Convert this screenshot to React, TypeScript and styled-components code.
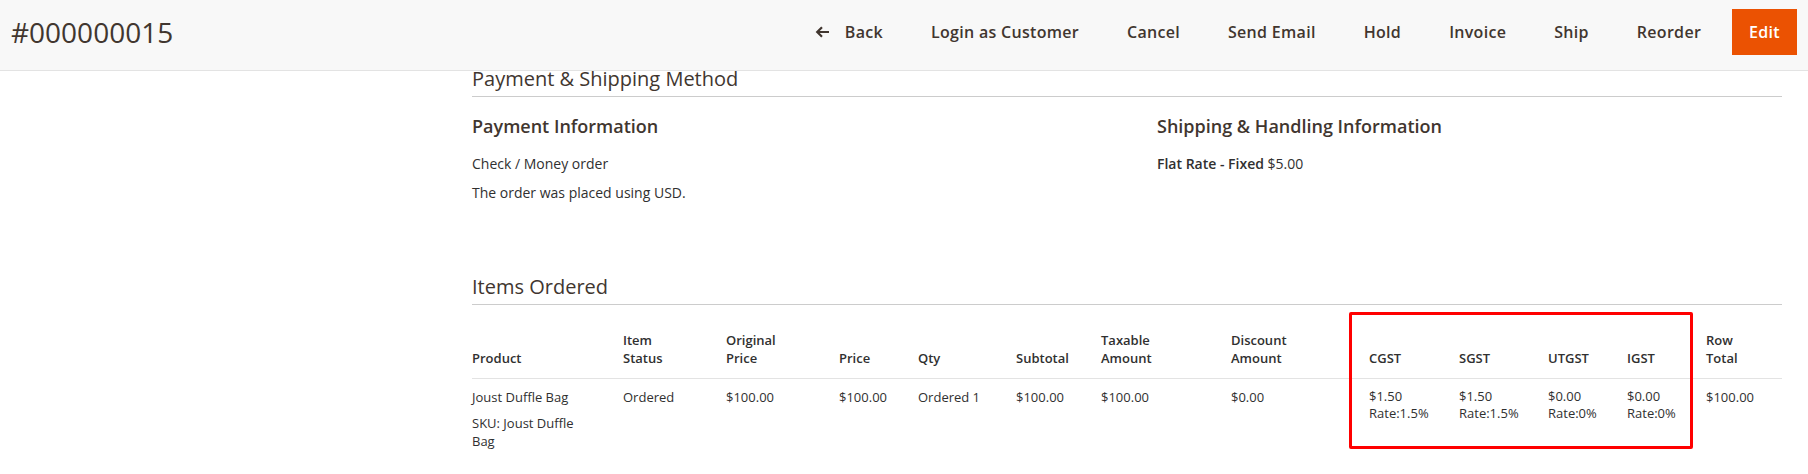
import React from "react";
import styled, { createGlobalStyle } from "styled-components";

const GlobalStyle = createGlobalStyle`
  html, body {
    margin: 0;
    padding: 0;
    background: #ffffff;
  }
  body {
    font-family: "Open Sans", "Noto Sans", sans-serif;
    color: #303030;
    font-size: 14px;
  }
`;

const Header = styled.header`
  display: flex;
  align-items: center;
  justify-content: space-between;
  height: 70px;
  box-sizing: content-box;
  padding: 0 11px;
  background: #f8f8f8;
  border-bottom: 1px solid #e3e3e3;
`;

const PageTitle = styled.h1`
  margin: 0 0 7px;
  font-size: 28px;
  font-weight: 400;
  line-height: 40px;
  color: #41362f;
`;

const Actions = styled.div`
  display: flex;
  align-items: center;
  gap: 14px;
  margin-bottom: 6px;
`;

const ActionButton = styled.button<{ $primary?: boolean }>`
  display: inline-flex;
  align-items: center;
  gap: 15px;
  height: 46px;
  padding: 0 17px;
  border: 0;
  border-radius: 0;
  background: ${(p) => (p.$primary ? "#eb5202" : "transparent")};
  color: ${(p) => (p.$primary ? "#ffffff" : "#41362f")};
  font-family: "Open Sans", sans-serif;
  font-size: 16px;
  font-weight: 600;
  letter-spacing: 0.3px;
  line-height: 20px;
  cursor: pointer;
`;

const Content = styled.main`
  padding: 0 26px 0 472px;
`;

const SectionTitle = styled.h2<{ $gap?: number }>`
  margin: ${(p) => p.$gap ?? 0}px 0 0;
  padding-bottom: 9px;
  border-bottom: 1px solid #cccccc;
  font-size: 20px;
  font-weight: 400;
  line-height: 16px;
  color: #41362f;
`;

const InfoGrid = styled.div`
  display: grid;
  grid-template-columns: 1fr 1fr;
  column-gap: 60px;
  margin-top: 18px;
`;

const InfoTitle = styled.h3`
  margin: 0 0 17px;
  font-size: 18px;
  font-weight: 600;
  line-height: 22px;
  color: #41362f;
`;

const InfoLine = styled.p`
  margin: 0 0 10px;
  font-size: 14px;
  line-height: 19px;
  color: #303030;

  strong {
    font-weight: 600;
  }
`;

const TableArea = styled.div`
  position: relative;
  margin-top: 16px;
`;

const ItemsTable = styled.table`
  width: 100%;
  table-layout: fixed;
  border-collapse: collapse;
  font-size: 13px;
  color: #303030;
`;

const HeadRow = styled.tr`
  border-bottom: 1px solid #e3e3e3;
`;

const HeadCell = styled.th`
  padding: 10px 10px 11px 0;
  text-align: left;
  vertical-align: bottom;
  font-weight: 600;
  line-height: 18px;
  color: #303030;
`;

const HeadLabel = styled.span`
  display: block;
  width: min-content;
`;

const Cell = styled.td<{ $wide?: boolean }>`
  padding: 9px ${(p) => (p.$wide ? 30 : 10)}px 4px 0;
  text-align: left;
  vertical-align: top;
  line-height: 18px;
`;

const Sku = styled.div`
  margin-top: 8px;
`;

const TaxLine = styled.div`
  line-height: 17px;
`;

const Highlight = styled.div`
  position: absolute;
  top: -9px;
  left: 877px;
  width: 344px;
  height: 137px;
  box-sizing: border-box;
  border: 3px solid #ff0000;
  border-radius: 2px;
  pointer-events: none;
`;

const BackArrow = () => (
  <svg width="15" height="12" viewBox="0 0 15 12" aria-hidden="true">
    <path
      d="M14 6H2.5M7 1.2L2.2 6L7 10.8"
      fill="none"
      stroke="#41362f"
      strokeWidth="2.2"
    />
  </svg>
);

const columns = [151, 103, 113, 79, 98, 85, 130, 138, 90, 89, 79, 79, 76];

const headers = [
  "Product",
  "Item Status",
  "Original Price",
  "Price",
  "Qty",
  "Subtotal",
  "Taxable Amount",
  "Discount Amount",
  "CGST",
  "SGST",
  "UTGST",
  "IGST",
  "Row Total",
];

const taxes = [
  { amount: "$1.50", rate: "Rate:1.5%" },
  { amount: "$1.50", rate: "Rate:1.5%" },
  { amount: "$0.00", rate: "Rate:0%" },
  { amount: "$0.00", rate: "Rate:0%" },
];

const actions = [
  "Login as Customer",
  "Cancel",
  "Send Email",
  "Hold",
  "Invoice",
  "Ship",
  "Reorder",
];

export default function App() {
  return (
    <>
      <GlobalStyle />
      <Header>
        <PageTitle>#000000015</PageTitle>
        <Actions>
          <ActionButton>
            <BackArrow />
            Back
          </ActionButton>
          {actions.map((a) => (
            <ActionButton key={a}>{a}</ActionButton>
          ))}
          <ActionButton $primary>Edit</ActionButton>
        </Actions>
      </Header>
      <Content>
        <SectionTitle>Payment &amp; Shipping Method</SectionTitle>
        <InfoGrid>
          <div>
            <InfoTitle>Payment Information</InfoTitle>
            <InfoLine>Check / Money order</InfoLine>
            <InfoLine>The order was placed using USD.</InfoLine>
          </div>
          <div>
            <InfoTitle>Shipping &amp; Handling Information</InfoTitle>
            <InfoLine>
              <strong>Flat Rate - Fixed</strong> $5.00
            </InfoLine>
          </div>
        </InfoGrid>
        <SectionTitle $gap={67}>Items Ordered</SectionTitle>
        <TableArea>
          <ItemsTable>
            <colgroup>
              {columns.map((w, i) => (
                <col key={i} style={{ width: w }} />
              ))}
            </colgroup>
            <thead>
              <HeadRow>
                {headers.map((h) => (
                  <HeadCell key={h}>
                    <HeadLabel>{h}</HeadLabel>
                  </HeadCell>
                ))}
              </HeadRow>
            </thead>
            <tbody>
              <tr>
                <Cell $wide>
                  <div>Joust Duffle Bag</div>
                  <Sku>SKU: Joust Duffle Bag</Sku>
                </Cell>
                <Cell>Ordered</Cell>
                <Cell>$100.00</Cell>
                <Cell>$100.00</Cell>
                <Cell>Ordered 1</Cell>
                <Cell>$100.00</Cell>
                <Cell>$100.00</Cell>
                <Cell>$0.00</Cell>
                {taxes.map((t, i) => (
                  <Cell key={i}>
                    <TaxLine>{t.amount}</TaxLine>
                    <TaxLine>{t.rate}</TaxLine>
                  </Cell>
                ))}
                <Cell>$100.00</Cell>
              </tr>
            </tbody>
          </ItemsTable>
          <Highlight />
        </TableArea>
      </Content>
    </>
  );
}
